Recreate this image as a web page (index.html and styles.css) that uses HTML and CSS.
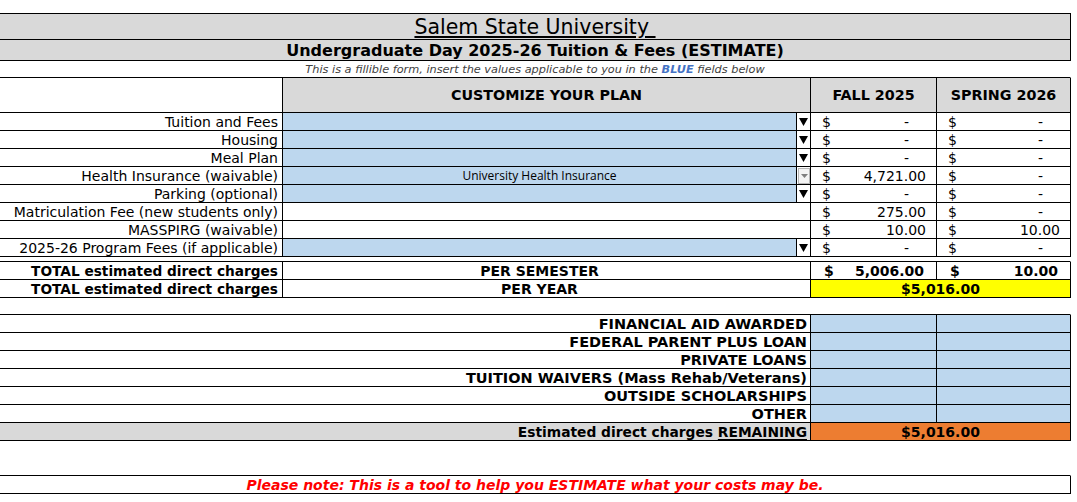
FILE: index.html
```html
<!DOCTYPE html>
<html>
<head>
<meta charset="utf-8">
<title>Salem State University Tuition Estimate</title>
<link rel="stylesheet" href="styles.css">
</head>
<body>
<div class="sheet">
  <div class="row title"><span class="u">Salem State University&nbsp;</span></div>
  <div class="row subtitle">Undergraduate Day 2025-26 Tuition &amp; Fees (ESTIMATE)</div>
  <div class="row note"><span>This is a fillible form, insert the values applicable to you in the <b class="blue">BLUE</b> fields below</span></div>

  <div class="row grid head">
    <div class="c lbl"></div>
    <div class="c hd span2">CUSTOMIZE YOUR PLAN</div>
    <div class="c hd">FALL 2025</div>
    <div class="c hd">SPRING 2026</div>
  </div>

  <div class="row grid">
    <div class="c lbl">Tuition and Fees</div>
    <div class="c sel"></div>
    <div class="c arrow"><svg width="9" height="8" viewBox="0 0 9 8"><polygon points="0,0 9,0 4.5,8" fill="#000"/></svg></div>
    <div class="c money"><span>$</span><span class="dash">-</span></div>
    <div class="c money"><span>$</span><span class="dash">-</span></div>
  </div>
  <div class="row grid">
    <div class="c lbl">Housing</div>
    <div class="c sel"></div>
    <div class="c arrow"><svg width="9" height="8" viewBox="0 0 9 8"><polygon points="0,0 9,0 4.5,8" fill="#000"/></svg></div>
    <div class="c money"><span>$</span><span class="dash">-</span></div>
    <div class="c money"><span>$</span><span class="dash">-</span></div>
  </div>
  <div class="row grid">
    <div class="c lbl">Meal Plan</div>
    <div class="c sel"></div>
    <div class="c arrow"><svg width="9" height="8" viewBox="0 0 9 8"><polygon points="0,0 9,0 4.5,8" fill="#000"/></svg></div>
    <div class="c money"><span>$</span><span class="dash">-</span></div>
    <div class="c money"><span>$</span><span class="dash">-</span></div>
  </div>
  <div class="row grid">
    <div class="c lbl">Health Insurance (waivable)</div>
    <div class="c sel chosen">University Health Insurance</div>
    <div class="c arrow soft"><span class="btn"><svg width="7" height="4" viewBox="0 0 7 4"><polygon points="0,0 7,0 3.5,4" fill="#7f7f7f"/></svg></span></div>
    <div class="c money"><span>$</span><span>4,721.00</span></div>
    <div class="c money"><span>$</span><span class="dash">-</span></div>
  </div>
  <div class="row grid">
    <div class="c lbl">Parking (optional)</div>
    <div class="c sel"></div>
    <div class="c arrow"><svg width="9" height="8" viewBox="0 0 9 8"><polygon points="0,0 9,0 4.5,8" fill="#000"/></svg></div>
    <div class="c money"><span>$</span><span class="dash">-</span></div>
    <div class="c money"><span>$</span><span class="dash">-</span></div>
  </div>
  <div class="row grid">
    <div class="c lbl">Matriculation Fee (new students only)</div>
    <div class="c span2"></div>
    <div class="c money"><span>$</span><span>275.00</span></div>
    <div class="c money"><span>$</span><span class="dash">-</span></div>
  </div>
  <div class="row grid">
    <div class="c lbl">MASSPIRG (waivable)</div>
    <div class="c span2"></div>
    <div class="c money"><span>$</span><span>10.00</span></div>
    <div class="c money"><span>$</span><span>10.00</span></div>
  </div>
  <div class="row grid">
    <div class="c lbl">2025-26 Program Fees (if applicable)</div>
    <div class="c sel"></div>
    <div class="c arrow"><svg width="9" height="8" viewBox="0 0 9 8"><polygon points="0,0 9,0 4.5,8" fill="#000"/></svg></div>
    <div class="c money"><span>$</span><span class="dash">-</span></div>
    <div class="c money"><span>$</span><span class="dash">-</span></div>
  </div>

  <div class="row gap"></div>

  <div class="row grid bold">
    <div class="c lbl">TOTAL estimated direct charges</div>
    <div class="c span2 center per">PER SEMESTER</div>
    <div class="c money tot"><span>$</span><span>5,006.00</span></div>
    <div class="c money tot"><span>$</span><span>10.00</span></div>
  </div>
  <div class="row grid bold">
    <div class="c lbl">TOTAL estimated direct charges</div>
    <div class="c span2 center per">PER YEAR</div>
    <div class="c span2 center yellow">$5,016.00</div>
  </div>

  <div class="row blank1"></div>

  <div class="row lower bold">
    <div class="c lbl caps">FINANCIAL AID AWARDED</div>
    <div class="c sel"></div>
    <div class="c sel"></div>
  </div>
  <div class="row lower bold">
    <div class="c lbl caps">FEDERAL PARENT PLUS LOAN</div>
    <div class="c sel"></div>
    <div class="c sel"></div>
  </div>
  <div class="row lower bold">
    <div class="c lbl caps">PRIVATE LOANS</div>
    <div class="c sel"></div>
    <div class="c sel"></div>
  </div>
  <div class="row lower bold">
    <div class="c lbl caps">TUITION WAIVERS (Mass Rehab/Veterans)</div>
    <div class="c sel"></div>
    <div class="c sel"></div>
  </div>
  <div class="row lower bold">
    <div class="c lbl caps">OUTSIDE SCHOLARSHIPS</div>
    <div class="c sel"></div>
    <div class="c sel"></div>
  </div>
  <div class="row lower bold">
    <div class="c lbl caps">OTHER</div>
    <div class="c sel"></div>
    <div class="c sel"></div>
  </div>
  <div class="row lower bold">
    <div class="c lbl grey rem">Estimated direct charges&nbsp;<span class="u">REMAINING</span></div>
    <div class="c span2 center orange">$5,016.00</div>
  </div>

  <div class="row blank2"></div>

  <div class="row final">Please note: This is a tool to help you ESTIMATE what your costs may be.</div>
</div>
</body>
</html>
```

FILE: styles.css
```css
body {
  margin: 0;
  background: #fff;
  color: #000;
  font-family: "DejaVu Sans", Verdana, sans-serif;
}

.sheet {
  width: 1071px;
  padding-top: 13px;
}

.row {
  box-sizing: border-box;
  border-bottom: 1px solid #000;
  border-right: 1px solid #000;
}

.title {
  height: 27px;
  border-top: 1px solid #000;
  background: #d9d9d9;
  display: flex;
  align-items: center;
  justify-content: center;
  font-size: 20.5px;
  padding-top: 1px;
}

.u {
  text-decoration: underline;
  text-underline-offset: 2px;
}

.subtitle {
  height: 21px;
  background: #d9d9d9;
  display: flex;
  align-items: center;
  justify-content: center;
  font-size: 16px;
  font-weight: bold;
}

.note {
  height: 17px;
  border-right-color: transparent;
  display: flex;
  align-items: center;
  justify-content: center;
  font-size: 11.3px;
  font-style: italic;
  color: #404040;
}

.blue {
  color: #4472c4;
}

.grid {
  display: grid;
  grid-template-columns: 282px 514px 14px 126px 134px;
  height: 18px;
}

.head {
  height: 35px;
}

.c {
  box-sizing: border-box;
  border-left: 1px solid #000;
  display: flex;
  align-items: center;
  overflow: hidden;
  white-space: nowrap;
  font-size: 14px;
  min-width: 0;
}

.c.lbl {
  border-left: none;
  justify-content: flex-end;
  padding-right: 4px;
}

.hd {
  background: #d9d9d9;
  justify-content: center;
  font-weight: bold;
  font-size: 14.3px;
}

.span2 {
  grid-column: span 2;
}

.sel {
  background: #bdd7ee;
}

.chosen {
  justify-content: center;
  font-family: "Open Sans", "Liberation Sans", sans-serif;
  font-size: 12px;
}

.arrow {
  justify-content: center;
  padding-top: 1px;
}

.arrow.soft {
  padding: 0;
}

.btn {
  box-sizing: border-box;
  width: 14px;
  height: 16px;
  border: 1px solid #b8b8b8;
  background: #f4f4f4;
  display: flex;
  align-items: center;
  justify-content: center;
  margin-left: 1px;
}

.money {
  justify-content: space-between;
  padding: 0 10px 0 11px;
}

.money .dash {
  padding-right: 17px;
}

.gap {
  height: 5px;
  border-right-color: transparent;
}

.bold .c {
  font-weight: bold;
}

.bold .c.lbl {
  font-size: 13.7px;
}

.center {
  justify-content: center;
}

.per {
  padding-right: 14px;
}

.tot {
  padding: 0 12px 0 13px;
}

.yellow {
  background: #ffff00;
}

.blank1 {
  height: 17px;
  border-right-color: transparent;
}

.lower {
  display: grid;
  grid-template-columns: 810px 126px 134px;
  height: 18px;
}

.lower .c.lbl {
  padding-right: 3px;
}

.lower .c.caps {
  font-size: 14.5px;
}

.lower .c.rem {
  font-size: 13.8px;
}

.grey {
  background: #d9d9d9;
}

.orange {
  background: #ed7d31;
}

.blank2 {
  height: 35px;
  border-right-color: transparent;
}

.final {
  height: 18px;
  display: flex;
  align-items: center;
  justify-content: center;
  color: #ff0000;
  font-weight: bold;
  font-style: italic;
  font-size: 14px;
}
```
